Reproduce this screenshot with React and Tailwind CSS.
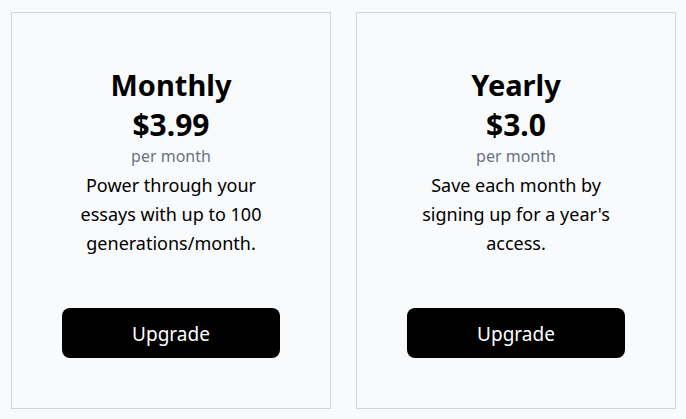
import React from 'react';

const plans = [
  {
    name: 'Monthly',
    price: '$3.99',
    desc: 'Power through your essays with up to 100 generations/month.',
  },
  {
    name: 'Yearly',
    price: '$3.0',
    desc: "Save each month by signing up for a year's access.",
  },
];

const PlanCard = ({ plan }) => (
  <div className="w-[320px] h-[397px] border border-gray-300 bg-gray-50 flex flex-col items-center pt-[54px] pb-[50px]">
    <h2 className="text-[29px] leading-9 font-bold text-black">{plan.name}</h2>
    <div className="text-[30px] leading-9 font-bold text-black mt-[4px]">{plan.price}</div>
    <div className="text-base leading-6 text-gray-500 mt-[1px]">per month</div>
    <p className="w-[210px] text-lg leading-[29px] text-center text-black mt-[3px]">{plan.desc}</p>
    <button className="mt-auto w-[218px] h-[50px] rounded-lg bg-black text-white text-[19px] pt-[2px]">
      Upgrade
    </button>
  </div>
);

export default function App() {
  return (
    <div
      className="min-h-screen bg-gray-50 flex gap-[25px] pl-[11px] pt-[12px]"
      style={{ fontFamily: '"Noto Sans", sans-serif' }}
    >
      {plans.map((p) => (
        <PlanCard key={p.name} plan={p} />
      ))}
    </div>
  );
}
